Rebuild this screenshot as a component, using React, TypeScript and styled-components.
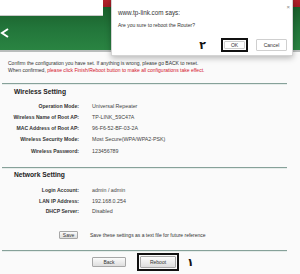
import { Fragment } from 'react';
import styled, { createGlobalStyle } from 'styled-components';

const GlobalStyle = createGlobalStyle`
  html, body {
    margin: 0;
    padding: 0;
    background: #fafafa;
  }
  body {
    font-family: 'Liberation Sans', Arial, sans-serif;
  }
`;

const Page = styled.div`
  position: relative;
  width: 300px;
  height: 274px;
  overflow: hidden;
  background: #fafafa;
  color: #333;
`;

const Header = styled.header`
  height: 50px;
  display: flex;
  flex-direction: column;
  align-items: flex-start;
  background: linear-gradient(
    to bottom,
    #b3222b 0,
    #a31c24 7px,
    #1a5f2b 7px,
    #22753a 28px,
    #2a8442 50px
  );
  border-bottom: 2px solid #b9bdbc;
`;

const SearchBox = styled.div`
  width: 103px;
  height: 15px;
  background: #fff;
  border-bottom: 1px solid #c9c9c9;
`;

const LogoMark = styled.svg`
  display: block;
  margin-top: 12px;
`;

const Dialog = styled.div`
  position: absolute;
  top: -4px;
  left: 111px;
  width: 182px;
  height: 60px;
  box-sizing: border-box;
  padding: 12px 5px 0 6px;
  display: flex;
  flex-direction: column;
  background: #fff;
  border: 1px solid #d4d4d4;
  box-shadow: 0 2px 6px rgba(0, 0, 0, 0.28);
`;

const DialogTitle = styled.div`
  font-size: 6.3px;
  line-height: 8px;
  color: #333;
`;

const DialogText = styled.div`
  margin-top: 5px;
  font-size: 5px;
  line-height: 7px;
  color: #333;
`;

const CloseX = styled.span`
  position: absolute;
  top: 7px;
  right: 2px;
  font-size: 6px;
  line-height: 6px;
  color: #888;
`;

const DialogButtons = styled.div`
  margin-top: 9px;
  display: flex;
  justify-content: flex-end;
  align-items: center;
`;

const Mark = styled.span`
  font-family: 'DejaVu Sans', sans-serif;
  font-size: 11px;
  font-weight: bold;
  line-height: 1;
  color: #111;
`;

const Highlight = styled.div`
  display: flex;
  box-sizing: border-box;
  border: 2px solid #111;
  padding: 1px;
`;

const DialogButton = styled.button<{ $w: number; $h: number }>`
  width: ${p => p.$w}px;
  height: ${p => p.$h}px;
  padding: 0;
  box-sizing: border-box;
  font-family: 'Liberation Sans', Arial, sans-serif;
  font-size: 5px;
  color: #333;
  background: #fff;
  border: 1px solid #cfcfcf;
  border-radius: 1px;
`;

const Content = styled.main`
  padding: 8px 13px 0 8px;
`;

const Intro = styled.p`
  margin: 0;
  font-size: 5px;
  line-height: 6.5px;
  color: #333;
  white-space: nowrap;
`;

const Warn = styled.span`
  color: #d4132b;
`;

const Divider = styled.div<{ $gap: number }>`
  margin: ${p => p.$gap}px 0 0 -6px;
  height: 0;
  border-top: 1px solid #86a199;
  border-bottom: 1px solid #e6ecea;
`;

const SectionTitle = styled.h2<{ $gap: number }>`
  margin: ${p => p.$gap}px 0 0 6px;
  font-size: 6.7px;
  line-height: 8px;
  font-weight: bold;
  color: #222;
`;

const Rows = styled.div<{ $gap: number; $row: number }>`
  margin-top: ${p => p.$gap}px;
  display: grid;
  grid-template-columns: 71px 1fr;
  grid-auto-rows: ${p => p.$row}px;
  column-gap: 13px;
  align-items: center;
`;

const Label = styled.div`
  text-align: right;
  font-size: 5.1px;
  font-weight: bold;
  color: #333;
  white-space: nowrap;
`;

const Value = styled.div`
  font-size: 5.3px;
  color: #444;
  white-space: nowrap;
`;

const SaveRow = styled.div`
  margin-top: 15px;
  padding-left: 51px;
  display: flex;
  align-items: center;
  gap: 12px;
`;

const PageButton = styled.button<{ $w: number; $h: number }>`
  width: ${p => p.$w}px;
  height: ${p => p.$h}px;
  padding: 0;
  box-sizing: border-box;
  font-family: 'Liberation Sans', Arial, sans-serif;
  font-size: 5px;
  color: #333;
  background: linear-gradient(#fbfbfb, #dedede);
  border: 1px solid #a7a7a7;
  border-radius: 1px;
`;

const Note = styled.span`
  font-size: 5px;
  color: #333;
  white-space: nowrap;
`;

const ActionRow = styled.div`
  margin-top: 1px;
  padding-left: 84px;
  display: flex;
  align-items: center;
  gap: 11px;
`;

const wireless = [
  ['Operation Mode:', 'Universal Repeater'],
  ['Wireless Name of Root AP:', 'TP-LINK_59C47A'],
  ['MAC Address of Root AP:', '96-F6-52-BF-03-2A'],
  ['Wireless Security Mode:', 'Most Secure(WPA/WPA2-PSK)'],
  ['Wireless Password:', '123456789'],
];

const network = [
  ['Login Account:', 'admin / admin'],
  ['LAN IP Address:', '192.168.0.254'],
  ['DHCP Server:', 'Disabled'],
];

const App = () => {
  return (
    <Page>
      <GlobalStyle />
      <Header>
        <SearchBox />
        <LogoMark width="9" height="10" viewBox="0 0 9 10">
          <path d="M8 1 L2 5 L8 9" stroke="#fff" strokeWidth="2" fill="none" />
        </LogoMark>
      </Header>

      <Dialog>
        <CloseX>×</CloseX>
        <DialogTitle>www.tp-link.com says:</DialogTitle>
        <DialogText>Are you sure to reboot the Router?</DialogText>
        <DialogButtons>
          <Mark>٢</Mark>
          <Highlight style={{ marginLeft: 15 }}>
            <DialogButton $w={21} $h={8}>OK</DialogButton>
          </Highlight>
          <DialogButton $w={31} $h={12} style={{ marginLeft: 8 }}>Cancel</DialogButton>
        </DialogButtons>
      </Dialog>

      <Content>
        <Intro>
          Confirm the configuration you have set. If anything is wrong, please go BACK to reset.
          <br />
          When confirmed, <Warn>please click Finish/Reboot button to make all configurations take effect.</Warn>
        </Intro>

        <Divider $gap={10} />
        <SectionTitle $gap={3}>Wireless Setting</SectionTitle>
        <Rows $gap={4} $row={11.25}>
          {wireless.map(([k, v]) => (
            <Fragment key={k}>
              <Label>{k}</Label>
              <Value>{v}</Value>
            </Fragment>
          ))}
        </Rows>

        <Divider $gap={11} />
        <SectionTitle $gap={2}>Network Setting</SectionTitle>
        <Rows $gap={6} $row={10.3}>
          {network.map(([k, v]) => (
            <Fragment key={k}>
              <Label>{k}</Label>
              <Value>{v}</Value>
            </Fragment>
          ))}
        </Rows>

        <SaveRow>
          <PageButton $w={19} $h={8}>Save</PageButton>
          <Note>Save these settings as a text file for future reference</Note>
        </SaveRow>

        <Divider $gap={11} />
        <ActionRow>
          <PageButton $w={34} $h={10}>Back</PageButton>
          <Highlight>
            <PageButton $w={36} $h={12}>Reboot</PageButton>
          </Highlight>
          <Mark style={{ marginLeft: -3 }}>١</Mark>
        </ActionRow>
      </Content>
    </Page>
  );
};

export default App;
